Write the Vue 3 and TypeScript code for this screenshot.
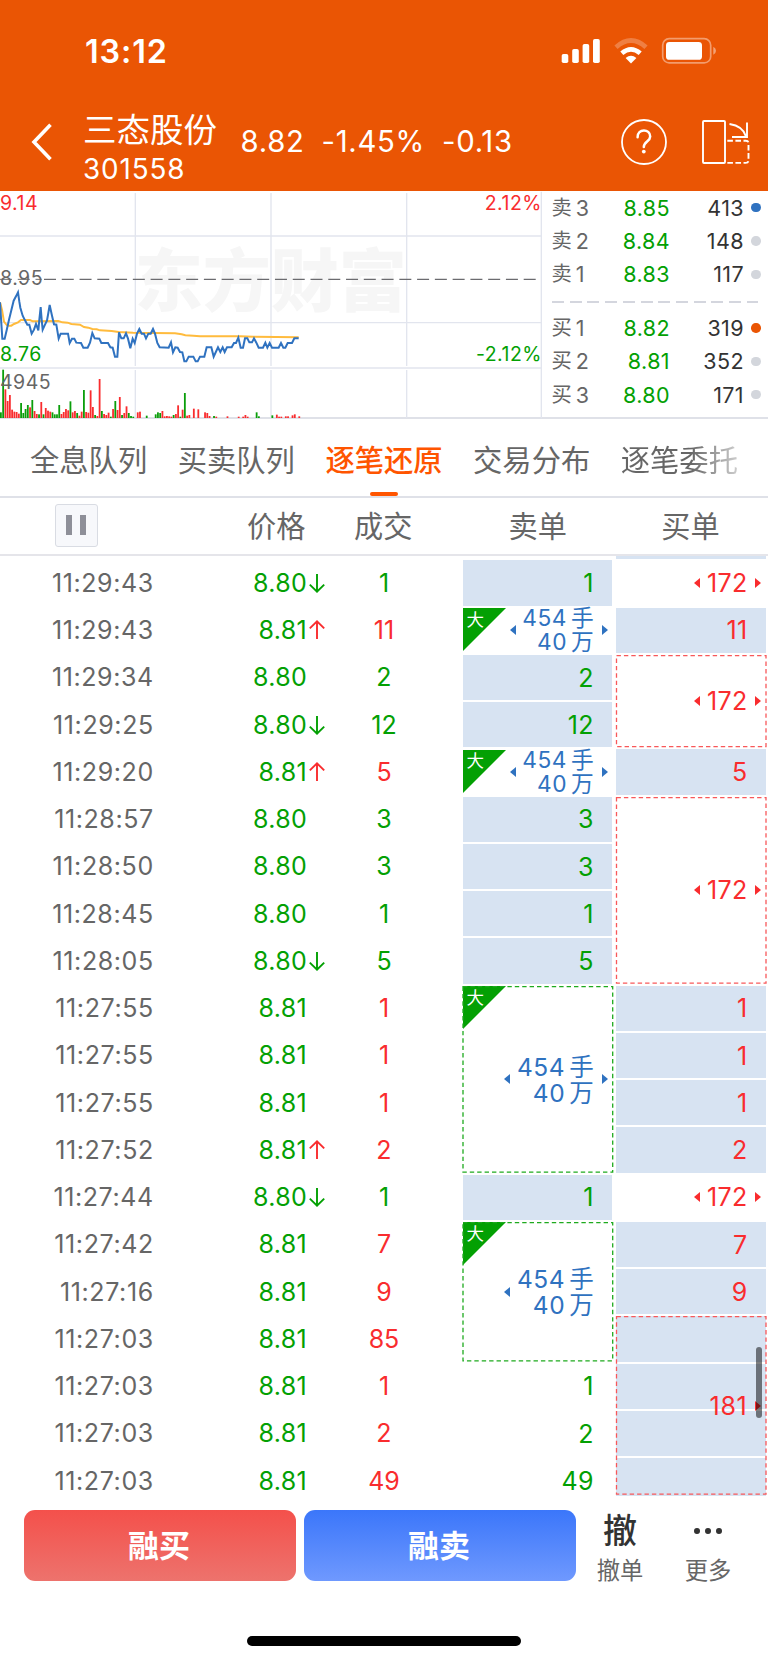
<script setup lang="ts">
interface Quote { label: string; level: number; price: string; qty: number; dot: string }
interface Trade { time: string; price: string; dir?: 'up' | 'down'; qty: number; side: 'buy' | 'sell' }
interface OrderCell {
  row: number
  span: number
  kind: 'fill' | 'plain' | 'big' | 'group' | 'blank' | 'tail'
  text?: string
  left?: boolean
  right?: boolean
}

const asks: Quote[] = [
  { label: '卖', level: 3, price: '8.85', qty: 413, dot: 'blue' },
  { label: '卖', level: 2, price: '8.84', qty: 148, dot: 'grey' },
  { label: '卖', level: 1, price: '8.83', qty: 117, dot: 'grey' },
]
const bids: Quote[] = [
  { label: '买', level: 1, price: '8.82', qty: 319, dot: 'orange' },
  { label: '买', level: 2, price: '8.81', qty: 352, dot: 'grey' },
  { label: '买', level: 3, price: '8.80', qty: 171, dot: 'grey' },
]

const tabs: string[] = ['全息队列', '买卖队列', '逐笔还原', '交易分布', '逐笔委托']
const activeTab = 2

const trades: Trade[] = [
  { time: '11:29:43', price: '8.80', dir: 'down', qty: 1, side: 'sell' },
  { time: '11:29:43', price: '8.81', dir: 'up', qty: 11, side: 'buy' },
  { time: '11:29:34', price: '8.80', qty: 2, side: 'sell' },
  { time: '11:29:25', price: '8.80', dir: 'down', qty: 12, side: 'sell' },
  { time: '11:29:20', price: '8.81', dir: 'up', qty: 5, side: 'buy' },
  { time: '11:28:57', price: '8.80', qty: 3, side: 'sell' },
  { time: '11:28:50', price: '8.80', qty: 3, side: 'sell' },
  { time: '11:28:45', price: '8.80', qty: 1, side: 'sell' },
  { time: '11:28:05', price: '8.80', dir: 'down', qty: 5, side: 'sell' },
  { time: '11:27:55', price: '8.81', qty: 1, side: 'buy' },
  { time: '11:27:55', price: '8.81', qty: 1, side: 'buy' },
  { time: '11:27:55', price: '8.81', qty: 1, side: 'buy' },
  { time: '11:27:52', price: '8.81', dir: 'up', qty: 2, side: 'buy' },
  { time: '11:27:44', price: '8.80', dir: 'down', qty: 1, side: 'sell' },
  { time: '11:27:42', price: '8.81', qty: 7, side: 'buy' },
  { time: '11:27:16', price: '8.81', qty: 9, side: 'buy' },
  { time: '11:27:03', price: '8.81', qty: 85, side: 'buy' },
  { time: '11:27:03', price: '8.81', qty: 1, side: 'buy' },
  { time: '11:27:03', price: '8.81', qty: 2, side: 'buy' },
  { time: '11:27:03', price: '8.81', qty: 49, side: 'buy' },
]

const sells: OrderCell[] = [
  { row: 1, span: 1, kind: 'fill', text: '1' },
  { row: 2, span: 1, kind: 'big', left: true, right: true },
  { row: 3, span: 1, kind: 'fill', text: '2' },
  { row: 4, span: 1, kind: 'fill', text: '12' },
  { row: 5, span: 1, kind: 'big', left: true, right: true },
  { row: 6, span: 1, kind: 'fill', text: '3' },
  { row: 7, span: 1, kind: 'fill', text: '3' },
  { row: 8, span: 1, kind: 'fill', text: '1' },
  { row: 9, span: 1, kind: 'fill', text: '5' },
  { row: 10, span: 4, kind: 'big', left: true, right: true },
  { row: 14, span: 1, kind: 'fill', text: '1' },
  { row: 15, span: 3, kind: 'big', left: true },
  { row: 18, span: 1, kind: 'plain', text: '1' },
  { row: 19, span: 1, kind: 'plain', text: '2' },
  { row: 20, span: 1, kind: 'plain', text: '49' },
]

const buys: OrderCell[] = [
  { row: 1, span: 1, kind: 'plain', text: '172', left: true, right: true },
  { row: 2, span: 1, kind: 'fill', text: '11' },
  { row: 3, span: 2, kind: 'group', text: '172', left: true, right: true },
  { row: 5, span: 1, kind: 'fill', text: '5' },
  { row: 6, span: 4, kind: 'group', text: '172', left: true, right: true },
  { row: 10, span: 1, kind: 'fill', text: '1' },
  { row: 11, span: 1, kind: 'fill', text: '1' },
  { row: 12, span: 1, kind: 'fill', text: '1' },
  { row: 13, span: 1, kind: 'fill', text: '2' },
  { row: 14, span: 1, kind: 'plain', text: '172', left: true, right: true },
  { row: 15, span: 1, kind: 'fill', text: '7' },
  { row: 16, span: 1, kind: 'fill', text: '9' },
  { row: 17, span: 1, kind: 'blank' },
  { row: 18, span: 1, kind: 'blank' },
  { row: 19, span: 1, kind: 'blank' },
  { row: 20, span: 1, kind: 'blank' },
  { row: 17, span: 4, kind: 'tail', text: '181', right: true },
]

const place = (c: OrderCell) => ({ gridRow: `${c.row} / span ${c.span}` })

const priceLine =
  '0,352 3,400 7,461 14,461 20,436 27,404 34,376 41,347 48,334 54,322 58,350 61,368 68,392 75,406 82,419 88,419 95,446 102,434 108,417 115,436 118,404 122,366 125,404 128,434 135,419 141,406 145,384 149,360 155,388 162,418 169,419 176,461 182,446 204,446 209,474 216,461 223,461 229,473 243,474 250,488 263,488 270,473 277,444 284,460 298,461 304,474 324,474 331,487 338,488 345,515 352,515 357,442 364,460 371,460 378,445 384,461 391,490 398,461 404,474 411,446 418,432 425,446 432,446 438,460 445,446 452,446 459,432 465,446 472,474 479,487 506,488 513,472 519,502 526,487 533,488 540,501 547,502 553,529 559,529 566,515 580,515 587,529 593,529 600,515 613,515 620,487 634,487 641,515 654,487 661,501 668,487 674,501 681,487 695,487 702,474 708,474 715,458 722,488 729,488 735,460 742,460 748,472 756,472 762,460 769,473 776,488 789,488 796,473 802,488 809,474 816,488 836,488 843,474 850,488 856,488 863,474 876,474 883,460 896,460'
const avgLine =
  '0,352 6,375 12,410 20,420 27,422 34,422 42,417 54,412 63,405 90,405 98,409 175,408 187,412 203,413 214,417 240,419 252,426 265,428 277,432 290,433 300,436 335,438 356,441 400,443 525,445 545,448 556,451 580,452 600,454 720,454 760,455 896,457'

// [slot, top, colour] for each minute bar of the volume strip
const volumes: [number, number, string][] = [
  [0, 682, 'g'], [1, 554, 'g'], [2, 613, 'r'], [3, 648, 'r'], [4, 630, 'r'], [5, 674, 'r'], [6, 680, 'r'], [7, 681, 'r'],
  [8, 686, 'r'], [9, 654, 'g'], [10, 684, 'g'], [11, 672, 'g'], [12, 660, 'g'], [13, 667, 'r'], [14, 645, 'g'], [15, 678, 'r'],
  [16, 687, 'r'], [17, 688, 'g'], [18, 651, 'r'], [19, 688, 'g'], [20, 669, 'r'], [21, 677, 'r'], [22, 680, 'r'], [23, 682, 'g'],
  [24, 688, 'g'], [25, 688, 'g'], [26, 660, 'g'], [27, 687, 'r'], [28, 681, 'r'], [29, 672, 'r'], [30, 676, 'r'], [31, 649, 'g'],
  [32, 682, 'r'], [33, 678, 'r'], [34, 684, 'g'], [35, 692, 'r'], [36, 680, 'r'], [37, 615, 'g'], [38, 681, 'r'], [39, 683, 'r'],
  [40, 616, 'r'], [41, 666, 'r'], [42, 690, 'g'], [43, 693, 'r'], [44, 582, 'r'], [45, 678, 'g'], [46, 687, 'r'], [47, 690, 'r'],
  [48, 683, 'r'], [49, 695, 'g'], [50, 672, 'r'], [51, 648, 'g'], [52, 675, 'r'], [53, 636, 'r'], [54, 690, 'g'], [55, 684, 'r'],
  [56, 664, 'r'], [57, 684, 'g'], [58, 693, 'g'], [59, 695, 'g'], [61, 682, 'r'], [62, 680, 'r'], [65, 692, 'g'], [69, 688, 'g'],
  [70, 682, 'g'], [71, 684, 'g'], [72, 678, 'r'], [73, 694, 'r'], [74, 693, 'r'], [75, 694, 'r'], [76, 695, 'r'], [77, 690, 'g'],
  [78, 687, 'r'], [79, 661, 'r'], [80, 695, 'g'], [81, 674, 'r'], [82, 624, 'g'], [83, 692, 'r'], [84, 690, 'r'], [86, 671, 'r'],
  [88, 673, 'r'], [91, 682, 'r'], [92, 684, 'r'], [93, 693, 'r'], [95, 693, 'g'], [96, 695, 'r'], [101, 694, 'r'], [106, 695, 'r'],
  [108, 695, 'r'], [109, 690, 'r'], [110, 695, 'r'], [114, 682, 'g'], [115, 694, 'g'], [121, 691, 'g'], [123, 689, 'r'],
  [124, 695, 'r'], [125, 695, 'r'], [127, 694, 'r'], [128, 694, 'r'], [130, 691, 'r'], [131, 688, 'r'], [133, 694, 'r'],
]
</script>

<template>
  <div class="screen">
    <header class="top">
      <div class="status">
        <span class="clock">13:12</span>
        <svg class="sys" width="160" height="30" viewBox="0 0 160 30">
          <g fill="#fff">
            <rect x="1.7" y="18" width="6.6" height="9" rx="1.8" />
            <rect x="12.2" y="13" width="6.6" height="14" rx="1.8" />
            <rect x="22.6" y="8" width="6.6" height="19" rx="1.8" />
            <rect x="33" y="3" width="6.8" height="24" rx="1.8" />
            <path d="M71 27.4 L65.6 22 Q71 17.6 76.4 22 Z" />
          </g>
          <path d="M61.8 17.3 Q71 9.3 80.2 17.3" fill="none" stroke="#fff" stroke-width="4.6" />
          <path d="M56 11.2 Q71 -2.2 86 11.2" fill="none" stroke="#fff" stroke-opacity=".25" stroke-width="4.8" />
          <rect x="102.7" y="2.7" width="48" height="24.2" rx="6.5" fill="none" stroke="#fff" stroke-opacity=".42" stroke-width="1.7" />
          <rect x="106" y="6" width="36" height="17.8" rx="3.4" fill="#fff" />
          <path d="M153.3 10.7 Q156 12 156 14.7 Q156 17.4 153.3 18.7 Z" fill="#fff" fill-opacity=".45" />
        </svg>
      </div>
      <div class="nav">
        <svg class="back" width="26" height="40" viewBox="0 0 26 40">
          <path d="M21.5 2.8 L5 20 L21.5 37.2" fill="none" stroke="#fff" stroke-width="3.6" />
        </svg>
        <div class="stock">
          <div class="name">三态股份</div>
          <div class="code">301558</div>
        </div>
        <div class="figures"><span>8.82</span><span>-1.45%</span><span>-0.13</span></div>
        <svg class="help" width="46" height="46" viewBox="0 0 46 46" fill="none" stroke="#fff">
          <circle cx="23" cy="23" r="22" stroke-width="1.8" />
          <path d="M16.6 18.2 C16.4 9.2 29.2 9.4 29.2 17.4 C29.2 22.4 22.8 22.6 22.8 28" stroke-width="2.5" stroke-linecap="round" />
          <circle cx="22.8" cy="32.6" r="1.9" fill="#fff" stroke="none" />
        </svg>
        <svg class="rotate" width="50" height="46" viewBox="0 0 50 46" fill="none" stroke="#fff" stroke-width="1.9">
          <rect x="2" y="2" width="22" height="42" rx="1" />
          <path d="M26.3 21.7 h18.5 q2.7 0 2.7 2.7 v16.8 q0 2.7 -2.7 2.7 h-18.5" stroke-dasharray="5.6 2.5" />
          <path d="M28.5 5 Q42 7 45 17.5 M46 3.5 v14.5 h-15" />
        </svg>
      </div>
    </header>

    <section class="market">
      <div class="chart">
        <svg class="plot" viewBox="0 18 1626 684" width="542" height="228">
          <text x="404" y="362" class="watermark">东方财富</text>
          <g stroke="#e2e5ee" stroke-width="4">
            <path d="M0 153 H1624 M0 413 H1624 M406 24 V543 M813 24 V543 M1220 24 V543 M406 555 V698 M813 555 V698 M1220 555 V698" />
            <path d="M0 549 H1624 M1624 20 V700" />
          </g>
          <path d="M131 283 H1624" stroke="#6b6b6f" stroke-width="4" stroke-dasharray="36 17.3" stroke-dashoffset="-1" />
          <path d="M0 283 H125" stroke="#6b6b6f" stroke-width="3" stroke-dasharray="36 17.3" />
          <polyline :points="avgLine" fill="none" stroke="#ffbb3d" stroke-width="6" />
          <polyline :points="priceLine" fill="none" stroke="#2f72c0" stroke-width="6" />
          <rect
            v-for="v in volumes" :key="v[0]"
            :x="v[0] * 6.73" :y="v[1]" width="5.4" :height="699 - v[1]"
            :fill="v[2] === 'g' ? '#0a9e0a' : '#f92c2e'"
          />
        </svg>
        <span class="mark hi">9.14</span>
        <span class="mark hi-pct">2.12%</span>
        <span class="mark mid">8.95</span>
        <span class="mark lo">8.76</span>
        <span class="mark lo-pct">-2.12%</span>
        <span class="mark vol">4945</span>
      </div>
      <div class="book">
        <div v-for="q in asks" :key="'a' + q.level" class="quote">
          <span class="lv"><em>{{ q.label }}</em>{{ q.level }}</span>
          <span class="px">{{ q.price }}</span>
          <span class="qt">{{ q.qty }}</span>
          <i :class="['dot', q.dot]"></i>
        </div>
        <div class="split"></div>
        <div v-for="q in bids" :key="'b' + q.level" class="quote">
          <span class="lv"><em>{{ q.label }}</em>{{ q.level }}</span>
          <span class="px">{{ q.price }}</span>
          <span class="qt">{{ q.qty }}</span>
          <i :class="['dot', q.dot]"></i>
        </div>
      </div>
    </section>

    <nav class="tabs">
      <span v-for="(t, i) in tabs" :key="t" :class="['tab', { on: i === activeTab, fade: i === tabs.length - 1 }]">{{ t }}</span>
    </nav>

    <div class="thead">
      <div class="pausecell"><button class="pause"><i></i><i></i></button></div>
      <span class="h-price">价格</span>
      <span class="h-qty">成交</span>
      <span class="h-sell">卖单</span>
      <span class="h-buy">买单</span>
    </div>

    <section class="body">
      <div class="sliver"></div>
      <div class="table">
        <div v-for="(t, i) in trades" :key="i" class="trade" :style="{ gridRow: i + 1 }">
          <span class="time">{{ t.time }}</span>
          <span class="price">{{ t.price }}</span>
          <span class="dir">
            <svg v-if="t.dir" :class="t.dir" width="18" height="22" viewBox="0 0 18 22" fill="none" stroke="currentColor" stroke-width="1.9">
              <path v-if="t.dir === 'down'" d="M9 2 V19.6 M1.8 12.6 L9 19.6 L16.2 12.6" />
              <path v-else d="M9 20 V2.4 M1.8 9.4 L9 2.4 L16.2 9.4" />
            </svg>
          </span>
          <span :class="['qty', t.side]">{{ t.qty }}</span>
        </div>

        <div v-for="c in sells" :key="'s' + c.row" :class="['cell', 'sellcol', c.kind, { tall: c.span > 1 }]" :style="place(c)">
          <template v-if="c.kind === 'big'">
            <svg class="flag" width="43" height="43" viewBox="0 0 43 43"><path d="M0 0 H43 L0 43 Z" fill="#03a003" /></svg>
            <span class="flagtext">大</span>
            <div class="lots"><div>454<em>手</em></div><div>40<em>万</em></div></div>
          </template>
          <span v-else class="num">{{ c.text }}</span>
          <svg v-if="c.kind === 'big' && c.span > 1" class="dash"><rect x="0" y="0.7" width="149.7" height="100%" class="dashrect" /></svg>
          <i v-if="c.left" class="tri l"></i>
          <i v-if="c.right" class="tri r"></i>
        </div>

        <div v-for="(c, i) in buys" :key="'b' + i" :class="['cell', 'buycol', c.kind]" :style="place(c)">
          <svg v-if="c.kind === 'group' || c.kind === 'tail'" class="dash"><rect x="0.5" y="0.7" width="149.5" height="100%" class="dashrect" /></svg>
          <span class="num">{{ c.text }}</span>
          <i v-if="c.left" class="tri l"></i>
          <i v-if="c.right" class="tri r"></i>
        </div>
      </div>
      <div class="scrollbar"></div>
    </section>

    <footer class="actions">
      <button class="trade-btn red">融买</button>
      <button class="trade-btn blue">融卖</button>
      <div class="tool"><span class="glyph">撤</span><span class="cap">撤单</span></div>
      <div class="tool">
        <span class="glyph dots"><i></i><i></i><i></i></span><span class="cap">更多</span>
      </div>
    </footer>
    <div class="home"></div>
  </div>
</template>

<style>
body { margin: 0; background: #fff; }
</style>

<style scoped>
.screen { width: 768px; height: 1663px; overflow: hidden; position: relative; background: #fff; color: #666; font-family: Inter, "Noto Sans CJK SC", sans-serif; }
.screen *, .screen { box-sizing: border-box; }
span { white-space: nowrap; }
i, em { font-style: normal; }

.top { height: 191px; background: #ea5504; color: #fff; }
.status { height: 92px; display: flex; justify-content: space-between; padding: 36px 48px 0 85px; }
.clock { font-size: 32.3px; line-height: 32px; font-weight: 600; letter-spacing: .9px; }
.sys { display: block; }
.nav { height: 99px; display: flex; align-items: center; padding-left: 28.5px; }
.back { flex: none; }
.stock { width: 140px; margin-left: 28.5px; padding-top: 15px; }
.name { font-size: 33.5px; line-height: 40px; font-weight: 400; }
.code { font-size: 27.8px; line-height: 38px; letter-spacing: .9px; }
.figures { width: 380px; margin-left: 17.5px; display: flex; gap: 17px; font-size: 29.3px; letter-spacing: .7px; }
.help { flex: none; margin-left: 0; }
.rotate { flex: none; margin-left: 34.5px; }

.market { height: 228px; display: flex; border-bottom: 2px solid #dfe1e8; }
.chart { width: 542px; position: relative; }
.plot { display: block; }
.watermark { font-family: "Noto Sans CJK SC", sans-serif; font-size: 204px; font-weight: 900; fill: #f6f6f6; }
.mark { position: absolute; font-size: 19.5px; line-height: 20px; letter-spacing: .5px; }
.hi { left: 0; top: 2px; color: #f92c2e; }
.hi-pct { right: 0; top: 2px; color: #f92c2e; }
.mid { left: 0; top: 77px; }
.lo { left: 0; top: 153px; color: #03a003; }
.lo-pct { right: 0; top: 153px; color: #03a003; }
.vol { left: 0; top: 181px; }

.book { flex: 1; }
.quote { height: 33.4px; display: flex; align-items: center; font-size: 21.5px; padding-left: 9.5px; letter-spacing: .4px; }
.lv { width: 46px; display: flex; align-items: center; }
.lv em { font-size: 20.3px; line-height: 24px; margin: 0 3.5px 0 0; }
.px { width: 72.5px; text-align: right; color: #03a003; }
.qt { width: 74px; text-align: right; color: #333; }
.dot { width: 9.4px; height: 9.4px; border-radius: 50%; margin-left: 7.4px; }
.blue.dot { background: #2f72c0; }
.grey.dot { background: #d3d6dc; }
.orange.dot { background: #ea5504; }
.split { height: 2px; margin: 10px 10px 8px; background: repeating-linear-gradient(90deg, #d4d6de 0 12px, transparent 12px 17.7px); }

.tabs { height: 79px; display: flex; border-bottom: 2px solid #dfe1e8; padding-left: 30px; gap: 31.7px; }
.tab { width: 116px; font-size: 29.3px; line-height: 84px; height: 77px; position: relative; }
.on { color: #ff5500; font-weight: 500; }
.on::after { content: ""; position: absolute; left: 45px; bottom: 0; width: 28px; height: 4px; border-radius: 2px; background: #ff5500; }
.fade { background: linear-gradient(90deg, #666 60%, #ccc 100%); -webkit-background-clip: text; background-clip: text; color: transparent; }

.thead { height: 58px; display: grid; grid-template-columns: 247px 107px 154.5px 152.8px 1fr; align-items: center; border-bottom: 2px solid #e5e5ea; font-size: 29.2px; line-height: 58px; }
.thead span { height: 56px; }
.pausecell { padding-left: 54.5px; display: flex; margin-top: -1.5px; }
.pause { width: 43px; height: 43px; border: 1px solid #d9dce3; border-radius: 3px; background: #f7f8fb; padding: 0; display: flex; justify-content: center; align-items: center; gap: 8px; }
.pause i { width: 6px; height: 20px; background: #8e8f98; }

.body { height: 940px; position: relative; overflow: hidden; font-size: 25px; }
.sliver { height: 2.5px; width: 150px; margin-left: 616px; background: #d7e3f2; }
.table { display: grid; grid-template-columns: 462.5px 149.8px 3.7px 150px 2px; grid-template-rows: repeat(20, 47.25px); margin-top: 1.9px; }
.trade { grid-column: 1; height: 45.2px; display: grid; grid-template-columns: 153.8px 153.2px 47.5px 60px; align-items: center; }
.time { text-align: right; letter-spacing: .6px; }
.price { text-align: right; color: #03a003; letter-spacing: .3px; }
.dir { padding-left: .8px; display: flex; }
.up { color: #f92c2e; }
.down { color: #03a003; }
.qty { text-align: center; padding-right: 1px; }
.qty.buy { color: #f92c2e; }
.qty.sell { color: #03a003; }

.cell { position: relative; margin-bottom: 2px; display: flex; align-items: center; justify-content: flex-end; padding-right: 18.5px; letter-spacing: .3px; }
.sellcol { grid-column: 2; color: #03a003; }
.buycol { grid-column: 4; color: #f92c2e; }
.fill, .blank { background: #d7e3f2; }
.tail { margin-bottom: 10px; letter-spacing: .7px; }
.dash { position: absolute; left: 0; top: 0; width: 151px; height: calc(100% - 1.6px); overflow: visible; }
.dashrect { fill: none; stroke-width: 1.3; stroke-dasharray: 4.4 3; }
.sellcol .dashrect { stroke: #1eaa1e; }
.buycol .dashrect { stroke: #f8585a; }
.flag { position: absolute; left: 0; top: .5px; }
.flagtext { position: absolute; left: 4px; top: 1px; font-size: 17.5px; line-height: 22px; color: #fff; letter-spacing: 0; }
.lots { color: #2f72c0; font-size: 22.7px; line-height: 24px; text-align: right; letter-spacing: .6px; }
.lots em { letter-spacing: 0; margin-left: 4px; }
.tall .lots { font-size: 24.5px; line-height: 26px; padding-top: 1px; }
.tri { position: absolute; top: calc(50% - 5px); width: 0; height: 0; border: 5px solid transparent; }
.tri.l { border-left-width: 0; border-right: 6px solid currentColor; left: 78px; }
.tri.r { border-right-width: 0; border-left: 6px solid currentColor; right: 5px; }
.sellcol .tri { color: #2f72c0; }
.sellcol .tri.l { left: 47px; }
.sellcol.tall .tri.l { left: 41.5px; }
.sellcol .tri.r { right: 4.5px; }
.scrollbar { position: absolute; right: 6px; top: 791px; width: 6px; height: 71px; border-radius: 3px; background: rgba(0, 0, 0, .5); }

.actions { height: 85px; padding: 14px 0 0 24px; display: flex; align-items: flex-start; }
.trade-btn { width: 272px; height: 71px; margin-right: 8px; border: 0; border-radius: 11px; color: #fff; font: 700 31px "Noto Sans CJK SC", sans-serif; padding: 0 2px 5px 0; }
.trade-btn.red { background: linear-gradient(#f4504b, #ed736d); }
.trade-btn.blue { background: linear-gradient(#3b76fa, #6f99fe); }
.tool { width: 88px; display: flex; flex-direction: column; align-items: center; }
.tool:nth-child(3) { margin-left: -8px; }
.glyph { font-size: 34px; line-height: 42px; height: 42px; font-weight: 500; color: #333; }
.cap { font-size: 23.3px; line-height: 37px; }
.dots { display: flex; gap: 5.4px; align-items: center; }
.dots i { width: 5.8px; height: 5.8px; border-radius: 50%; background: #333; }
.home { width: 274px; height: 10px; border-radius: 5px; background: #000; margin: 55px 0 0 247px; }
</style>
